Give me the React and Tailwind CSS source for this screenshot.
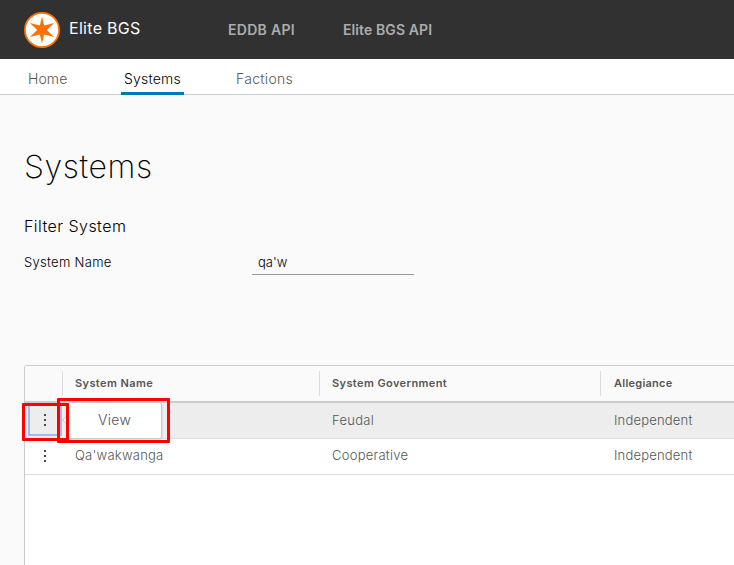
function Logo() {
  return (
    <svg className="h-9 w-9 shrink-0" viewBox="0 0 36 36">
      <circle cx="18" cy="18" r="17.1" fill="#fff" stroke="#ff7100" strokeWidth="1.8" />
      <path
        fill="#ff7100"
        d="M18 4.5 20.2 13.6 30.2 11 22.8 18 30.2 25 20.2 22.4 18 31.5 15.8 22.4 5.8 25 13.2 18 5.8 11 15.8 13.6Z"
      />
    </svg>
  );
}

function Dots() {
  return (
    <svg className="h-4 w-4" viewBox="0 0 16 16" fill="#4c4c4c">
      <rect x="7" y="2" width="2" height="2" />
      <rect x="7" y="7" width="2" height="2" />
      <rect x="7" y="12" width="2" height="2" />
    </svg>
  );
}

function HeaderCell({ className, children }) {
  return (
    <div className={`flex h-[25px] items-center border-l border-[#ddd] text-[11px] font-semibold text-[#565656] ${className}`}>
      {children}
    </div>
  );
}

export default function App() {
  return (
    <div className="relative flex h-[565px] w-[734px] flex-col overflow-hidden whitespace-nowrap bg-[#fafafa] font-['Inter','Noto_Sans',sans-serif] font-light text-black">
      <header className="flex h-[59px] shrink-0 items-center bg-[#313131] pl-6">
        <Logo />
        <span className="ml-[9px] w-[159px] pb-[3px] text-[16px] font-normal tracking-[0.3px] text-[#fafafa]">Elite BGS</span>
        <span className="w-[115px] pb-px text-[14px] font-semibold tracking-[0.3px] text-[#acacac]">EDDB API</span>
        <span className="pb-px text-[14px] font-semibold tracking-[0.1px] text-[#acacac]">Elite BGS API</span>
      </header>
      <nav className="flex h-9 shrink-0 border-b border-[#ccc] bg-white pl-[25px] text-[14px] text-[#565656]">
        <span className="w-24 pl-[3px] pt-[10px] leading-5 tracking-[0.1px]">Home</span>
        <span className="h-9 w-[63px] border-b-[3px] border-[#0079b8] pl-[3px] pt-[10px] leading-5 tracking-[0.2px] text-black">Systems</span>
        <span className="pl-[52px] pt-[10px] leading-5 tracking-[0.3px]">Factions</span>
      </nav>
      <main className="flex grow flex-col pl-6">
        <h1 className="mt-[48px] text-[32px] font-[250] leading-[48px] tracking-[0.6px]">Systems</h1>
        <h2 className="mt-[23px] text-[16px] leading-6 tracking-[0.45px]">Filter System</h2>
        <div className="mt-[12px] flex h-[25px] text-[13px]">
          <label className="w-[228px] leading-6 tracking-[0.3px]">System Name</label>
          <div className="w-[162px] border-b border-[#9a9a9a] pl-1.5 leading-6 text-black">qa'w</div>
        </div>
        <section className="mt-[90px] flex grow flex-col rounded-tl-[3px] border-l border-t border-[#ccc] bg-white text-[13px] text-[#565656]">
          <div className="flex h-[37px] shrink-0 items-center border-b-2 border-[#ccc] bg-[#fafafa] pl-[37px]">
            <HeaderCell className="w-[257px] pl-3 tracking-[0.4px]">System Name</HeaderCell>
            <HeaderCell className="w-[281px] pl-3 tracking-[0.4px]">System Government</HeaderCell>
            <HeaderCell className="grow pl-[13px] tracking-[0.25px]">Allegiance</HeaderCell>
          </div>
          <div className="flex h-9 shrink-0 items-center border-b border-[#ddd] bg-[#ededed]">
            <div className="relative flex h-[35px] w-[307px] items-start">
              <div className="ml-[3px] flex h-[33px] w-[34px] items-center justify-center border-2 border-[#9dbcf2]">
                <Dots />
              </div>
              <div className="absolute left-[39px] top-[12px] h-[10px] w-[10px] rotate-45 border border-[#ccc] bg-white" />
              <div className="absolute left-[42px] top-[-1px] flex h-[37px] w-[95px] items-center rounded-[3px] border border-[#ccc] bg-white pb-[2px] pl-[30px] text-[14px] tracking-[0.3px] shadow-[1px_1px_1px_#ddd]">
                View
              </div>
            </div>
            <span className="w-[282px] tracking-[0.3px]">Feudal</span>
            <span className="tracking-[0.2px]">Independent</span>
          </div>
          <div className="flex h-9 shrink-0 items-center border-b border-[#ddd] pb-[2px]">
            <div className="flex w-[50px] pl-3"><Dots /></div>
            <span className="w-[257px] tracking-[0.25px]">Qa'wakwanga</span>
            <span className="w-[282px] tracking-[0.25px]">Cooperative</span>
            <span className="tracking-[0.2px]">Independent</span>
          </div>
        </section>
      </main>
      <div className="absolute left-[22px] top-[403px] h-[38px] w-[47px] rounded-[1px] border-[3px] border-[#ff0000]" />
      <div className="absolute left-[57px] top-[398px] h-[45px] w-[113px] rounded-[1px] border-[3px] border-[#ff0000]" />
    </div>
  );
}
